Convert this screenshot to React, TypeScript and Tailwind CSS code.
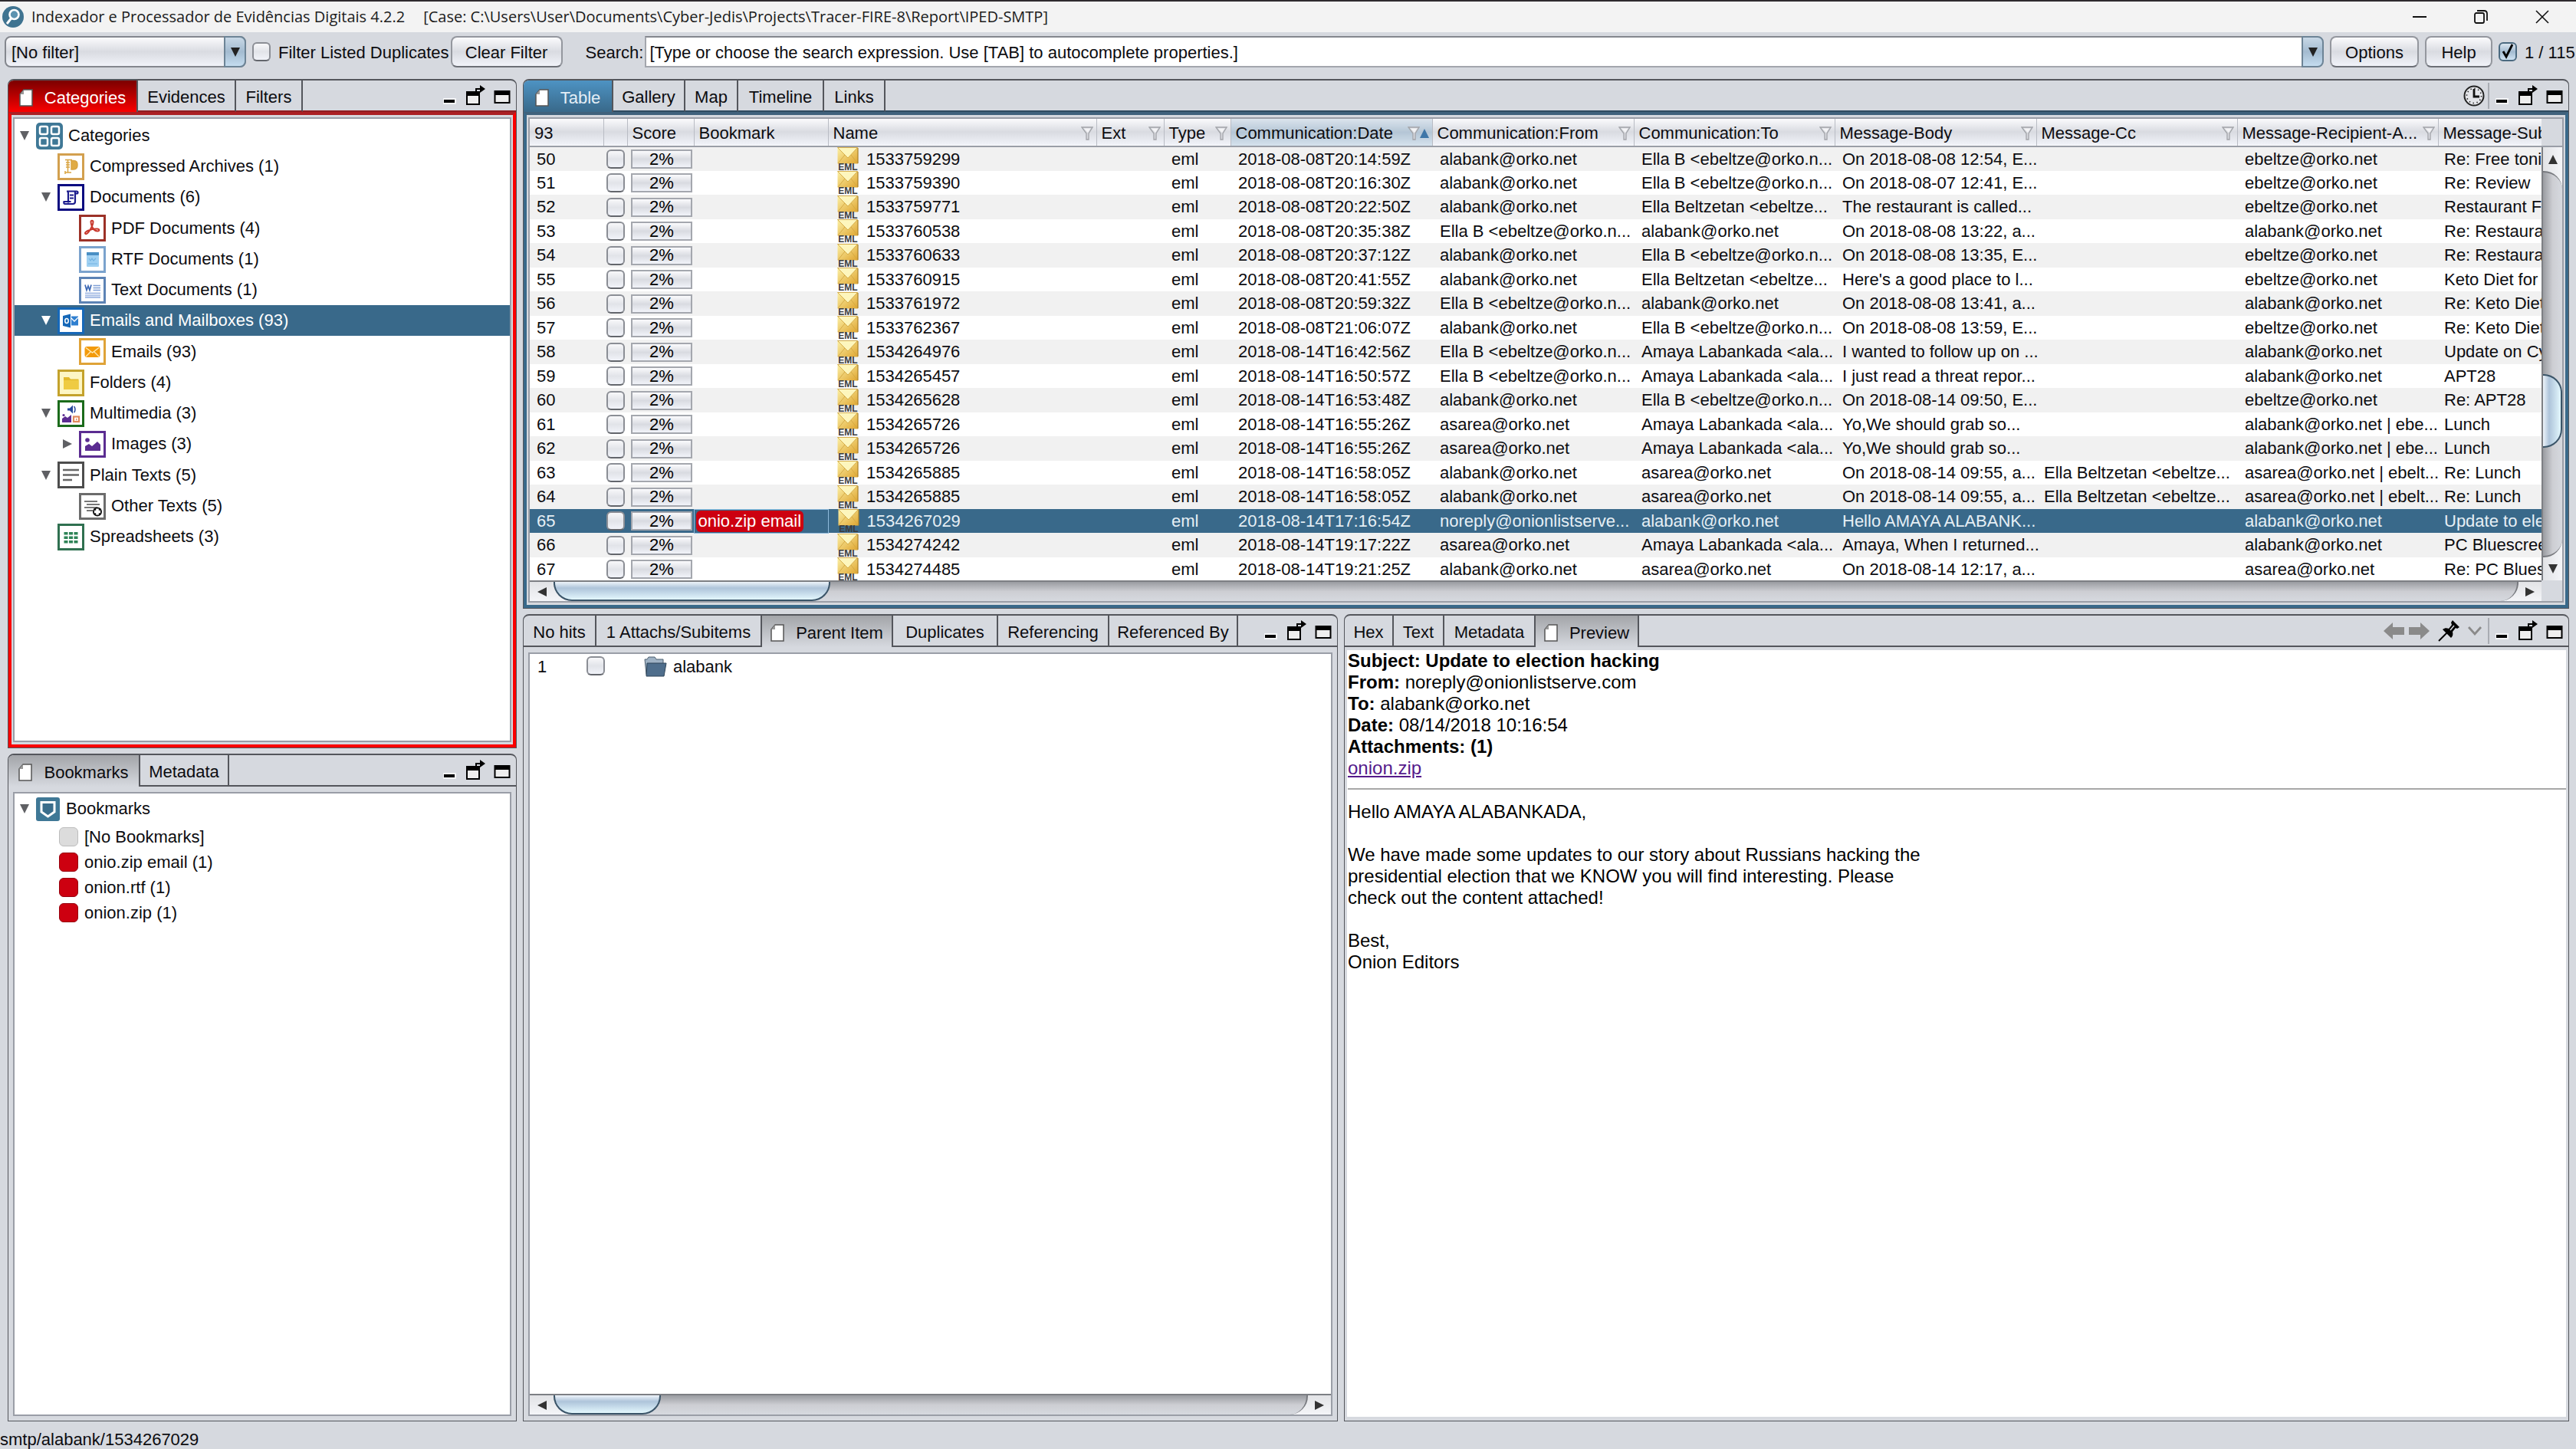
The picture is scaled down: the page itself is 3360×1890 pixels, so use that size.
import React from 'react';
import clsx from 'clsx';

type Tone = 'red' | 'blue' | 'plain';

type Tab = {
    label: string;
    width: string;
    active?: boolean;
};

type MailRow = {
    id: number;
    name: string;
    date: string;
    from: string;
    to: string;
    body: string;
    cc?: string;
    recipient: string;
    subject: string;
    bookmark?: string;
};

type IconKind =
    | 'zip'
    | 'doc'
    | 'pdf'
    | 'rtf'
    | 'word'
    | 'outlook'
    | 'mail'
    | 'folder'
    | 'media'
    | 'image'
    | 'text'
    | 'other'
    | 'sheet';

type TreeNode = {
    label: string;
    depth: number;
    icon: IconKind | 'root';
    arrow?: 'open' | 'closed';
    selected?: boolean;
};

const ALABANK = 'alabank@orko.net';
const ASAREA = 'asarea@orko.net';
const EBELTZE = 'ebeltze@orko.net';
const ELLA_B = 'Ella B <ebeltze@orko.n...';
const ELLA_BELTZETAN = 'Ella Beltzetan <ebeltze...';
const AMAYA = 'Amaya Labankada <ala...';

const rows: MailRow[] = [
    { id: 50, name: '1533759299', date: '2018-08-08T20:14:59Z', from: ALABANK, to: ELLA_B, body: 'On 2018-08-08 12:54, E...', recipient: EBELTZE, subject: 'Re: Free toni' },
    { id: 51, name: '1533759390', date: '2018-08-08T20:16:30Z', from: ALABANK, to: ELLA_B, body: 'On 2018-08-07 12:41, E...', recipient: EBELTZE, subject: 'Re: Review' },
    { id: 52, name: '1533759771', date: '2018-08-08T20:22:50Z', from: ALABANK, to: ELLA_BELTZETAN, body: 'The restaurant is called...', recipient: EBELTZE, subject: 'Restaurant F' },
    { id: 53, name: '1533760538', date: '2018-08-08T20:35:38Z', from: ELLA_B, to: ALABANK, body: 'On 2018-08-08 13:22, a...', recipient: ALABANK, subject: 'Re: Restaura' },
    { id: 54, name: '1533760633', date: '2018-08-08T20:37:12Z', from: ALABANK, to: ELLA_B, body: 'On 2018-08-08 13:35, E...', recipient: EBELTZE, subject: 'Re: Restaura' },
    { id: 55, name: '1533760915', date: '2018-08-08T20:41:55Z', from: ALABANK, to: ELLA_BELTZETAN, body: "Here's a good place to l...", recipient: EBELTZE, subject: 'Keto Diet for' },
    { id: 56, name: '1533761972', date: '2018-08-08T20:59:32Z', from: ELLA_B, to: ALABANK, body: 'On 2018-08-08 13:41, a...', recipient: ALABANK, subject: 'Re: Keto Diet' },
    { id: 57, name: '1533762367', date: '2018-08-08T21:06:07Z', from: ALABANK, to: ELLA_B, body: 'On 2018-08-08 13:59, E...', recipient: EBELTZE, subject: 'Re: Keto Diet' },
    { id: 58, name: '1534264976', date: '2018-08-14T16:42:56Z', from: ELLA_B, to: AMAYA, body: 'I wanted to follow up on ...', recipient: ALABANK, subject: 'Update on Cy' },
    { id: 59, name: '1534265457', date: '2018-08-14T16:50:57Z', from: ELLA_B, to: AMAYA, body: 'I just read a threat repor...', recipient: ALABANK, subject: 'APT28' },
    { id: 60, name: '1534265628', date: '2018-08-14T16:53:48Z', from: ALABANK, to: ELLA_B, body: 'On 2018-08-14 09:50, E...', recipient: EBELTZE, subject: 'Re: APT28' },
    { id: 61, name: '1534265726', date: '2018-08-14T16:55:26Z', from: ASAREA, to: AMAYA, body: 'Yo,We should grab so...', recipient: 'alabank@orko.net | ebe...', subject: 'Lunch' },
    { id: 62, name: '1534265726', date: '2018-08-14T16:55:26Z', from: ASAREA, to: AMAYA, body: 'Yo,We should grab so...', recipient: 'alabank@orko.net | ebe...', subject: 'Lunch' },
    { id: 63, name: '1534265885', date: '2018-08-14T16:58:05Z', from: ALABANK, to: ASAREA, body: 'On 2018-08-14 09:55, a...', cc: ELLA_BELTZETAN, recipient: 'asarea@orko.net | ebelt...', subject: 'Re: Lunch' },
    { id: 64, name: '1534265885', date: '2018-08-14T16:58:05Z', from: ALABANK, to: ASAREA, body: 'On 2018-08-14 09:55, a...', cc: ELLA_BELTZETAN, recipient: 'asarea@orko.net | ebelt...', subject: 'Re: Lunch' },
    { id: 65, name: '1534267029', date: '2018-08-14T17:16:54Z', from: 'noreply@onionlistserve...', to: ALABANK, body: 'Hello AMAYA ALABANK...', recipient: ALABANK, subject: 'Update to ele', bookmark: 'onio.zip email' },
    { id: 66, name: '1534274242', date: '2018-08-14T19:17:22Z', from: ASAREA, to: AMAYA, body: 'Amaya, When I returned...', recipient: ALABANK, subject: 'PC Bluescree' },
    { id: 67, name: '1534274485', date: '2018-08-14T19:21:25Z', from: ALABANK, to: ASAREA, body: 'On 2018-08-14 12:17, a...', recipient: ASAREA, subject: 'Re: PC Blues' },
];

const columns = [
    { label: '93', width: 'w-[96px]' },
    { label: '', width: 'w-[31px]' },
    { label: 'Score', width: 'w-[87px]' },
    { label: 'Bookmark', width: 'w-[175px]' },
    { label: 'Name', width: 'w-[350px]', filter: true },
    { label: 'Ext', width: 'w-[88px]', filter: true },
    { label: 'Type', width: 'w-[87px]', filter: true },
    { label: 'Communication:Date', width: 'w-[263px]', filter: true, sorted: true },
    { label: 'Communication:From', width: 'w-[263px]', filter: true },
    { label: 'Communication:To', width: 'w-[262px]', filter: true },
    { label: 'Message-Body', width: 'w-[263px]', filter: true },
    { label: 'Message-Cc', width: 'w-[262px]', filter: true },
    { label: 'Message-Recipient-A...', width: 'w-[262px]', filter: true },
    { label: 'Message-Sub', width: 'w-auto' },
];

const categories: TreeNode[] = [
    { label: 'Categories', depth: 0, icon: 'root', arrow: 'open' },
    { label: 'Compressed Archives (1)', depth: 1, icon: 'zip' },
    { label: 'Documents (6)', depth: 1, icon: 'doc', arrow: 'open' },
    { label: 'PDF Documents (4)', depth: 2, icon: 'pdf' },
    { label: 'RTF Documents (1)', depth: 2, icon: 'rtf' },
    { label: 'Text Documents (1)', depth: 2, icon: 'word' },
    { label: 'Emails and Mailboxes (93)', depth: 1, icon: 'outlook', arrow: 'open', selected: true },
    { label: 'Emails (93)', depth: 2, icon: 'mail' },
    { label: 'Folders (4)', depth: 1, icon: 'folder' },
    { label: 'Multimedia (3)', depth: 1, icon: 'media', arrow: 'open' },
    { label: 'Images (3)', depth: 2, icon: 'image', arrow: 'closed' },
    { label: 'Plain Texts (5)', depth: 1, icon: 'text', arrow: 'open' },
    { label: 'Other Texts (5)', depth: 2, icon: 'other' },
    { label: 'Spreadsheets (3)', depth: 1, icon: 'sheet' },
];

const indent = ['pl-[7px]', 'pl-[35px]', 'pl-[63px]'];

const nimbus = 'bg-linear-to-b from-[#fbfbfd] via-[#d9dbe1] to-[#f1f3f9]';

const frameColor: Record<IconKind, string> = {
    zip: '#d3a04f',
    doc: '#0b0b80',
    pdf: '#9c3127',
    rtf: '#7ba3cd',
    word: '#5c83b5',
    outlook: '#1668b8',
    mail: '#dfa338',
    folder: '#c4a22c',
    media: '#1b6b1b',
    image: '#5b2c91',
    text: '#4d4d4d',
    other: '#6c6c6c',
    sheet: '#2f7050',
};

const IconGlyph = ({ kind }: { kind: IconKind }) => {
    switch (kind) {
        case 'zip':
            return (
                <g fill="none" stroke="#d9a441" strokeWidth="1.5">
                    <path d="M10 8.500h9M13.500 9v16M11 12h5M11 15h5M11 18h5M10 25h8" />
                    <path d="M18 9.500h3c3.500 0 5 2 5 5.500s-1.500 6-5 6h-3z" fill="#e0ab45" />
                    <path d="M10 23v4" />
                </g>
            );
        case 'doc':
            return (
                <g fill="none" stroke="#1a1a8c" strokeWidth="2.200">
                    <path d="M12 9.500h13c2 0 2 3 0 3h-2M12 9.500c2 0 2 1 2 3v12M23 10v13c0 2-1 3-3 3H10c-1.500 0-2-1-1.500-3h9M16 14.500h5M16 18.500h5" />
                </g>
            );
        case 'pdf':
            return (
                <path
                    d="M15.500 9.500c0-2.500 3-2.500 3 0 0 3-2 7-4.500 11-1.500 2.500-4 5.500-5.500 4.500s.5-3 4-4.500c4-1.700 8-2.300 11.500-2 3 .3 3 3 .5 3-3 0-6-2.500-7.500-6-.7-2-1.500-4-1.500-6z"
                    fill="none"
                    stroke="#c8372c"
                    strokeWidth="2"
                />
            );
        case 'rtf':
            return (
                <g>
                    <rect x="10" y="8" width="16" height="19" rx="1" fill="#9fd0f2" />
                    <rect x="10" y="8" width="16" height="4" fill="#4a8fc4" />
                    <path d="M13 16l2 3 2-3 2 3 3-3M12 23h12" stroke="#74b4e2" fill="none" strokeWidth="1.200" />
                </g>
            );
        case 'word':
            return (
                <g stroke="#3c68b4" fill="none">
                    <path d="M8 10.500l2 7 2-5.500 2 5.500 2-7" strokeWidth="1.700" />
                    <path d="M18.500 11.500H28M18.500 14.500H28M18.500 17.500H28" stroke="#7f9fd6" strokeWidth="1.600" />
                    <path d="M8 21.500h20M8 24.500h20M8 27h20" stroke="#a9bfe6" strokeWidth="1.800" />
                </g>
            );
        case 'outlook':
            return (
                <g>
                    <path d="M7 11l10-2.500v18L7 24z" fill="#1668b8" />
                    <path d="M18 11.500h9v12h-9z" fill="#2f7fd0" />
                    <path d="M18 14l4 4 5-5" fill="none" stroke="#fff" strokeWidth="1.300" />
                    <ellipse cx="12" cy="17.500" rx="2.200" ry="3" fill="none" stroke="#fff" strokeWidth="1.500" />
                </g>
            );
        case 'mail':
            return (
                <g>
                    <rect x="7.500" y="11" width="20" height="14" rx="3" fill="#f39a0a" />
                    <path d="M9 12.500l8.500 6.500 8.500-6.500M9 24l6-6M26 24l-6-6" fill="none" stroke="#ffe9b0" strokeWidth="1.400" />
                </g>
            );
        case 'folder':
            return (
                <g>
                    <rect x="3" y="3" width="29" height="29" fill="#fdf6c4" />
                    <path d="M8 10h7l2 2.500h10.500V26H8z" fill="#e3b92a" />
                    <path d="M8 14h19.500v12H8z" fill="#efcb42" />
                </g>
            );
        case 'media':
            return (
                <g>
                    <path d="M13 10.500h3l4-4v11l-4-4h-3z" fill="#27489b" />
                    <path d="M21.500 8c2 2 2 6 0 8" fill="none" stroke="#27489b" strokeWidth="1.500" />
                    <path d="M6 29v-5l4-3 3 2 5-4v10z" fill="#5b2c91" />
                    <circle cx="8" cy="19.500" r="1.600" fill="#5b2c91" />
                    <rect x="21" y="21.500" width="7" height="6.500" fill="#fff" stroke="#e08a5c" strokeWidth="2.200" />
                    <path d="M24 23.500v3l2-1.500z" fill="#e08a5c" />
                </g>
            );
        case 'image':
            return (
                <g fill="#5b2c91">
                    <circle cx="11" cy="12" r="2.800" />
                    <path d="M8 26v-6l5-3 4 3 7-6 4 4v8z" />
                </g>
            );
        case 'text':
            return <path d="M7 11h21M7 17.500h21M7 24h12" stroke="#666" strokeWidth="2.600" />;
        case 'other':
            return (
                <g>
                    <path d="M7 11h17M10 15h17M7 19h17M10 23h8" stroke="#777" strokeWidth="2" />
                    <circle cx="24" cy="24.500" r="6" fill="#111" />
                    <path d="M24 20.500v8M20 24.500h8" stroke="#fff" strokeWidth="3.600" />
                </g>
            );
        case 'sheet':
            return (
                <g fill="#2e8457">
                    {[8.5, 15, 21.5].map((x) =>
                        [11, 16.5, 22].map((y) => <rect key={`${x}-${y}`} x={x} y={y} width="5" height="3.500" />)
                    )}
                </g>
            );
    }
};

const CategoryIcon = ({ kind }: { kind: IconKind | 'root' }) => {
    if (kind === 'root') {
        return (
            <svg viewBox="0 0 35 35" className="size-[35px] shrink-0">
                <rect width="35" height="35" rx="5" fill="#3f7896" />
                {[5, 20].map((x) =>
                    [5, 20].map((y) => (
                        <rect key={`${x}-${y}`} x={x} y={y} width="10" height="10" rx="2" fill="#3f7896" stroke="#fff" strokeWidth="2.500" />
                    ))
                )}
            </svg>
        );
    }
    return (
        <svg viewBox="0 0 35 35" className="size-[35px] shrink-0">
            <rect x="1.500" y="1.500" width="32" height="32" fill="#fff" stroke={frameColor[kind]} strokeWidth="3" />
            <IconGlyph kind={kind} />
        </svg>
    );
};

const Triangle = ({ dir, className = '' }: { dir: 'up' | 'down' | 'left' | 'right'; className?: string }) => {
    const d = {
        up: 'M0 12L6 0l6 12z',
        down: 'M0 0h12L6 12z',
        left: 'M12 0v12L0 6z',
        right: 'M0 0l12 6-12 6z',
    }[dir];
    return (
        <svg viewBox="0 0 12 12" className={clsx('size-3 shrink-0', className)} preserveAspectRatio="none">
            <path d={d} fill="currentColor" />
        </svg>
    );
};

const PageIcon = () => (
    <svg viewBox="0 0 18 23" className="h-[23px] w-[18px] shrink-0">
        <path d="M6 1h11v21H1V7z" fill="#fff" stroke="#555" strokeWidth="1.500" />
        <path d="M6 1v6H1z" fill="#999" />
    </svg>
);

const FunnelIcon = () => (
    <svg viewBox="0 0 16 20" className="h-5 w-4 shrink-0">
        <path d="M1 2h14L10 10v8H7v-8z" fill="#d9dbe0" stroke="#a2a4a9" strokeWidth="1.300" />
        <path d="M3.500 3.500h9L9 9z" fill="#f4f4f6" />
    </svg>
);

const EmlIcon = () => (
    <svg viewBox="0 0 28 31" className="block h-[31px] w-7">
        <defs>
            <linearGradient id="env" x1="0" y1="0" x2="1" y2="1">
                <stop offset="0" stopColor="#fbf0a6" />
                <stop offset="1" stopColor="#dfa530" />
            </linearGradient>
        </defs>
        <rect x="0.500" y="0.500" width="26.500" height="21" fill="url(#env)" />
        <path d="M0.500 0.500h26L14 14z" fill="#fdf6bd" stroke="#d3a843" strokeWidth="0.900" />
        <path d="M1 21L10 10M26.500 21L18 10" stroke="#d3a843" strokeWidth="0.900" />
        <path d="M27 1v20" stroke="#a8812a" strokeWidth="1.200" />
        <text x="14" y="30" textAnchor="middle" fontFamily="Liberation Sans" fontWeight="700" fontSize="12" fill="#3c3c3c">
            EML
        </text>
    </svg>
);

const WindowIcons = () => (
    <div className="flex items-center pr-[7px]">
        <button aria-label="Minimize" className="w-[30px]">
            <svg viewBox="0 0 30 28" className="h-7 w-[30px]">
                <rect x="-1" y="17" width="18" height="8" fill="#fff" opacity="0.700" />
                <rect x="1" y="19" width="14" height="4" />
            </svg>
        </button>
        <button aria-label="Detach" className="w-[36px]">
            <svg viewBox="0 0 36 28" className="h-7 w-9">
                <rect x="1" y="9" width="16" height="16" fill="#eee" stroke="#000" strokeWidth="2" />
                <rect x="0" y="8" width="18" height="6" />
                <path d="M13 9V5h6" fill="none" stroke="#000" strokeWidth="2" />
                <path d="M18 0l7 5-7 5z" />
            </svg>
        </button>
        <button aria-label="Maximize" className="w-[22px]">
            <svg viewBox="0 0 22 28" className="h-7 w-[22px]">
                <rect x="1.500" y="8" width="19" height="15" fill="#eee" stroke="#000" strokeWidth="2" />
                <rect x="1" y="7" width="20" height="6" />
            </svg>
        </button>
    </div>
);

const ClockIcon = () => (
    <svg viewBox="0 0 28 28" className="-mr-1 size-7">
        <circle cx="14" cy="14" r="12.500" fill="#e4e5e9" stroke="#222" strokeWidth="2" />
        <circle cx="14" cy="14" r="9.500" fill="none" stroke="#222" strokeWidth="1.600" strokeDasharray="1.400 3.574" />
        <path d="M14 5v10h7" fill="none" stroke="#111" strokeWidth="2.800" />
    </svg>
);

const PreviewTools = () => (
    <div className="flex h-full items-center gap-1.5">
        <button aria-label="Back">
            <svg viewBox="0 0 27 22" className="h-[22px] w-[27px]" fill="#8a8a8a"><path d="M0 11L12 0v6h15v10H12v6z" /></svg>
        </button>
        <button aria-label="Forward">
            <svg viewBox="0 0 27 22" className="h-[22px] w-[27px]" fill="#8a8a8a"><path d="M27 11L15 0v6H0v10h15v6z" /></svg>
        </button>
        <button aria-label="Pin" className="ml-1">
            <svg viewBox="0 0 30 28" className="h-7 w-[30px]">
                <path d="M20 0l9 9-3 2-2-1-4 5c1 4 0 6-2 8L7 12c3-2 5-2 8-1l4-5-1-3z" />
                <path d="M13 16L2 27" stroke="#000" strokeWidth="2" />
                <path d="M17 13l5-6" stroke="#d6d9df" strokeWidth="1.500" />
            </svg>
        </button>
        <button aria-label="More" className="ml-1">
            <svg viewBox="0 0 18 14" className="h-3.5 w-[18px]"><path d="M1 2l8 9 8-9" fill="none" stroke="#8a8a8a" strokeWidth="2.800" /></svg>
        </button>
    </div>
);

const activeTab: Record<Tone, string> = {
    red: 'bg-linear-to-b from-[#7c0000] to-[#fb0000] text-white',
    blue: 'bg-linear-to-b from-[#4d93c3] to-[#39698a] text-[#e3eef6]',
    plain: 'bg-linear-to-b from-[#a3a5a9] to-[#d6d9df]',
};

const headLine: Record<Tone, string> = {
    red: 'border-b-[#8f1d22]',
    blue: 'border-b-[#2f4b60]',
    plain: 'border-b-[#54565c]',
};

const bodyFrame: Record<Tone, string> = {
    red: 'border-4 border-[#fb0000] border-t-[#ab2024] px-0.5 py-[3px]',
    blue: 'border-4 border-[#39698a] border-t-[#40627c] px-0.5 py-[3px]',
    plain: 'px-[6px] pt-[7px] pb-[6px]',
};

type PanelProps = {
    tabs: Tab[];
    tone?: Tone;
    tools?: React.ReactNode;
    bare?: boolean;
    children: React.ReactNode;
};

const Panel = ({ tabs, tone = 'plain', tools, bare = false, children }: PanelProps) => (
    <section className="flex min-h-0 min-w-0 flex-col overflow-hidden rounded-t-lg border border-t-2 border-[#54565c]">
        <div className="flex h-[41px] shrink-0" role="tablist">
            {tabs.map((tab) => (
                <button
                    key={tab.label}
                    role="tab"
                    aria-selected={!!tab.active}
                    className={clsx(
                        'flex shrink-0 items-center justify-center border-r-2 border-r-[#54565c] pt-1 whitespace-nowrap',
                        tab.width,
                        tab.active ? activeTab[tone] : clsx('border-b-2', headLine[tone])
                    )}
                >
                    {tab.active && (
                        <span className="mr-[15px]">
                            <PageIcon />
                        </span>
                    )}
                    {tab.label}
                </button>
            ))}
            <div className={clsx('flex flex-1 items-center justify-end border-b-2', headLine[tone])}>
                {tools && <div className="mr-2 flex h-[34px] items-center border-r-2 border-[#a9acb3] pr-2">{tools}</div>}
                <WindowIcons />
            </div>
        </div>
        <div className={clsx('flex min-h-0 flex-1 flex-col', bare ? 'px-[3px] pt-1 pb-[5px]' : bodyFrame[tone])}>
            <div className={clsx('flex min-h-0 flex-1 flex-col overflow-hidden bg-white', !bare && 'border-2 border-[#9a9ea7]')}>
                {children}
            </div>
        </div>
    </section>
);

const CheckBox = ({ label }: { label: string }) => (
    <input
        type="checkbox"
        aria-label={label}
        className="block h-[25px] w-6 appearance-none rounded-md border-2 border-[#8b8e95] border-b-[#63666c] bg-linear-to-b from-[#f8f8fa] via-[#e2e4e9] to-[#f1f3f9]"
    />
);

const HorizontalScroll = ({ thumb }: { thumb: string }) => (
    <div className="flex h-[27px] shrink-0 border-t-2 border-[#7d7f84] bg-linear-to-b from-[#e2e3e6] to-[#f4f5f8] text-[#333]">
        <button aria-label="Scroll left" className="flex w-[31px] items-center justify-center">
            <Triangle dir="left" />
        </button>
        <div className="flex flex-1 rounded-b-3xl border-r-2 border-[#77797e] bg-linear-to-b from-[#9a9ca1] via-[#cdced3] to-[#d6d9df]">
            <div className={clsx('rounded-b-3xl border-2 border-t-0 border-[#3a5468] bg-linear-to-b from-[#eef4fa] via-[#aec4da] via-35% to-[#e3f7fd]', thumb)} />
        </div>
        <button aria-label="Scroll right" className="flex w-[30px] items-center justify-center">
            <Triangle dir="right" />
        </button>
    </div>
);

const CategoryTree = () => (
    <ul className="pt-0.5">
        {categories.map((node) => (
            <li
                key={node.label}
                className={clsx(
                    'flex h-10 items-center nth-[4n]:h-[41px]',
                    indent[node.depth],
                    node.selected && 'bg-[#39698a] text-white'
                )}
            >
                <span className={clsx('mr-[9px] w-3', node.selected ? 'text-white' : 'text-[#5f6064]')}>
                    {node.arrow && <Triangle dir={node.arrow === 'open' ? 'down' : 'right'} />}
                </span>
                <CategoryIcon kind={node.icon} />
                <span className="ml-[7px]">{node.label}</span>
            </li>
        ))}
    </ul>
);

const bookmarks = ['[No Bookmarks]', 'onio.zip email (1)', 'onion.rtf (1)', 'onion.zip (1)'];

const BookmarkTree = () => (
    <div>
        <div className="flex h-10 items-center pl-[7px]">
            <Triangle dir="down" className="mr-[9px] text-[#5f6064]" />
            <svg viewBox="0 0 31 31" className="mr-2 size-[31px]">
                <rect width="31" height="31" rx="3" fill="#3f7896" />
                <path d="M7 6.500h17v12.500l-8.500 6-8.500-6z" fill="#3a6d8b" stroke="#fff" strokeWidth="3" />
            </svg>
            Bookmarks
        </div>
        <ul>
            {bookmarks.map((name, i) => (
                <li key={name} className="flex h-[33px] items-center gap-2 pl-[58px]">
                    <span
                        className={clsx(
                            'size-[25px] rounded-md border',
                            i === 0 ? 'border-[#bdbdbd] bg-[#dcdcdc]' : 'border-[#96000e] bg-[#cd0010]'
                        )}
                    />
                    {name}
                </li>
            ))}
        </ul>
    </div>
);

const MailTable = () => (
    <table className="w-full table-fixed border-collapse whitespace-nowrap">
        <thead>
            <tr className={clsx('h-9 border-b-2 border-[#9a9ea7]', nimbus)}>
                {columns.map((col, i) => (
                    <th
                        key={i}
                        className={clsx(
                            'overflow-hidden border-r border-[#b9bcc4] pt-[3px] pr-1 pb-0 pl-1.5 font-normal last:border-r-0',
                            col.width,
                            col.sorted && 'bg-linear-to-b from-[#dbe4ed] via-[#b4c5d5] to-[#d5e2ed]'
                        )}
                    >
                        <div className="flex items-center justify-between">
                            {col.label}
                            {col.filter && (
                                <span className="flex items-center">
                                    <FunnelIcon />
                                    {col.sorted && <Triangle dir="up" className="text-[#3f76a8]" />}
                                </span>
                            )}
                        </div>
                    </th>
                ))}
            </tr>
        </thead>
        <tbody>
            {rows.map((row) => (
                <tr
                    key={row.id}
                    className={clsx(
                        'h-[31px] odd:h-8 first:h-[31px]',
                        row.bookmark ? 'bg-[#39698a] text-[#e6eff5]' : 'odd:bg-[#f1f1f1]'
                    )}
                >
                    <td className="p-0 pl-[9px]">{row.id}</td>
                    <td className="p-0 pl-1">
                        <CheckBox label={`Select item ${row.id}`} />
                    </td>
                    <td className="p-0 pl-[5px]">
                        <button className={clsx('block h-[25px] w-20 border-2 border-[#a4a7ae] leading-5 text-black', nimbus)}>2%</button>
                    </td>
                    <td className={clsx('p-0', row.bookmark && 'border border-[#8fbbdc]')}>
                        {row.bookmark && (
                            <span className="ml-0.5 block w-fit rounded-md bg-[#cd0010] px-[3px] leading-7 text-white">{row.bookmark}</span>
                        )}
                    </td>
                    <td className="p-0 pl-3">
                        <div className="flex items-center gap-2.5">
                            <EmlIcon />
                            {row.name}
                        </div>
                    </td>
                    <td />
                    <td className="p-0 pl-2.5">eml</td>
                    <td className="p-0 pl-2.5">{row.date}</td>
                    <td className="p-0 pl-2.5">{row.from}</td>
                    <td className="p-0 pl-2.5">{row.to}</td>
                    <td className="p-0 pl-2.5">{row.body}</td>
                    <td className="p-0 pl-2.5">{row.cc}</td>
                    <td className="p-0 pl-2.5">{row.recipient}</td>
                    <td className="overflow-hidden p-0 pl-2">{row.subject}</td>
                </tr>
            ))}
        </tbody>
    </table>
);

const VerticalScroll = () => (
    <div className="flex w-[27px] shrink-0 flex-col bg-[#d6d9df]">
        <div className="h-[37px] border-b-2 border-[#9a9ea7]" />
        <div className="flex min-h-0 flex-1 flex-col border-l-2 border-[#7d7f84] bg-linear-to-r from-[#e2e3e6] to-[#f4f5f8] text-[#333]">
            <button aria-label="Scroll up" className="flex h-[31px] items-center justify-center">
                <Triangle dir="up" />
            </button>
            <div className="flex flex-1 flex-col rounded-r-3xl border-y-2 border-[#77797e] bg-linear-to-r from-[#9a9ca1] via-[#cdced3] to-[#d6d9df]">
                <div className="flex-[265]" />
                <div className="h-24 rounded-r-3xl border-2 border-l-0 border-[#3a5468] bg-linear-to-r from-[#eef4fa] via-[#aec4da] via-35% to-[#e3f7fd]" />
                <div className="flex-[142]" />
            </div>
            <button aria-label="Scroll down" className="flex h-[30px] items-center justify-center">
                <Triangle dir="down" />
            </button>
        </div>
        <div className="h-[27px]" />
    </div>
);

const TitleBar = () => (
    <header className="flex h-[42px] items-center border-t-2 border-[#2e2a2e] bg-[#f3f3f3] font-['Open_Sans',sans-serif] text-[20px] text-[#1b1b1b]">
        <svg viewBox="0 0 28 28" className="ml-[3px] size-7">
            <circle cx="14" cy="14" r="14" fill="#3f7390" />
            <circle cx="15.500" cy="11" r="6" fill="#5d93b0" stroke="#fff" strokeWidth="2.600" />
            <path d="M11.500 16L6 23" stroke="#fff" strokeWidth="3" />
        </svg>
        <h1 className="ml-2.5 flex gap-6 whitespace-nowrap">
            <span>Indexador e Processador de Evidências Digitais 4.2.2</span>
            <span>[Case: C:\Users\User\Documents\Cyber-Jedis\Projects\Tracer-FIRE-8\Report\IPED-SMTP]</span>
        </h1>
        <div className="ml-auto flex items-center gap-[62px] pr-[35px]">
            <button aria-label="Minimize window">
                <svg viewBox="0 0 18 18" className="size-[18px]"><path d="M0 9h18" stroke="#111" strokeWidth="2" /></svg>
            </button>
            <button aria-label="Restore window">
                <svg viewBox="0 0 18 18" className="size-[18px]" fill="none" stroke="#111" strokeWidth="1.800">
                    <rect x="1" y="4" width="12" height="13" rx="2" />
                    <path d="M4 1h9c2.500 0 4 1.500 4 4v9" />
                </svg>
            </button>
            <button aria-label="Close window">
                <svg viewBox="0 0 18 18" className="size-[18px]"><path d="M1 1l16 16M17 1L1 17" stroke="#111" strokeWidth="1.600" /></svg>
            </button>
        </div>
    </header>
);

const pushButton = 'h-[41px] rounded-lg border-2 border-[#94979e] border-b-[#6c6f76] pt-0.5';
const dropArrow = 'flex items-center justify-center rounded-r-lg border-2 border-[#6d8496] bg-linear-to-b from-[#c8d8e6] via-[#a3bbd0] to-[#c4dcef] text-[#222]';

const Toolbar = () => (
    <div className="flex h-[61px] items-start pt-[5px] pl-[6px] whitespace-nowrap">
        <div className="relative">
            <select
                aria-label="Filter"
                className={clsx('h-[41px] w-[315px] appearance-none rounded-lg border-2 border-[#84878e] pt-0.5 pl-[7px]', nimbus)}
            >
                <option>[No filter]</option>
            </select>
            <span className={clsx('pointer-events-none absolute inset-y-0 right-0 w-[29px]', dropArrow)}>
                <Triangle dir="down" />
            </span>
        </div>
        <label className="ml-2 flex h-[41px] items-center gap-2.5">
            <CheckBox label="Filter Listed Duplicates" />
            <span className="pt-0.5">Filter Listed Duplicates</span>
        </label>
        <button className={clsx('ml-0.5 w-[146px]', pushButton, nimbus)}>Clear Filter</button>
        <label htmlFor="search" className="ml-[30px] pt-px leading-[41px]">
            Search:
        </label>
        <input
            id="search"
            type="text"
            defaultValue="[Type or choose the search expression. Use [TAB] to autocomplete properties.]"
            className="ml-0.5 h-[41px] min-w-0 flex-1 border-2 border-r-0 border-[#a3a6ad] border-t-[#84878e] bg-white pt-0.5 pl-1"
        />
        <button aria-label="Search history" className={clsx('h-[41px] w-[29px]', dropArrow)}>
            <Triangle dir="down" />
        </button>
        <button className={clsx('ml-2 w-[116px]', pushButton, nimbus)}>Options</button>
        <button className={clsx('ml-2 w-[88px]', pushButton, nimbus)}>Help</button>
        <label className="ml-2 flex h-[41px] w-[101px] items-center gap-2.5">
            <span className="relative">
                <input
                    type="checkbox"
                    defaultChecked
                    className="block h-[25px] w-6 appearance-none rounded-md border-2 border-[#4b6a80] bg-linear-to-b from-[#dbe6f0] via-[#a3bbd0] to-[#cfe3f3]"
                />
                <svg viewBox="0 0 24 25" className="pointer-events-none absolute inset-0 h-[25px] w-6">
                    <path d="M6 12l4 7L18 3" fill="none" stroke="#000" strokeWidth="2.800" />
                </svg>
            </span>
            <span className="pt-0.5">1 / 115</span>
        </label>
    </div>
);

const PreviewMessage = () => (
    <article className="flex-1 pl-px text-[24px] leading-7 text-black">
        <p className="font-bold">Subject: Update to election hacking</p>
        <p><b>From:</b> noreply@onionlistserve.com</p>
        <p><b>To:</b> alabank@orko.net</p>
        <p><b>Date:</b> 08/14/2018 10:16:54</p>
        <p className="font-bold">Attachments: (1)</p>
        <p><a href="#onion" className="text-[#551a8b] underline">onion.zip</a></p>
        <hr className="mt-3 mb-[15px] border-t-2 border-[#a8a8a8]" />
        <p className="mb-7">Hello AMAYA ALABANKADA,</p>
        <p>We have made some updates to our story about Russians hacking the</p>
        <p>presidential election that we KNOW you will find interesting. Please</p>
        <p className="mb-7">check out the content attached!</p>
        <p>Best,</p>
        <p>Onion Editors</p>
    </article>
);

export default function App() {
    return (
        <div className="flex h-screen w-full flex-col overflow-hidden bg-[#d6d9df] font-['Liberation_Sans',Arial,sans-serif] text-[22px] leading-7 text-[#0c0c10]">
            <TitleBar />
            <Toolbar />
            <main className="grid min-h-0 flex-1 grid-cols-[664px_minmax(0,1fr)] gap-2 pr-[9px] pl-2.5">
                <div className="grid min-h-0 grid-rows-[minmax(0,873fr)_minmax(0,871fr)] gap-[7px]">
                    <Panel
                        tone="red"
                        tabs={[
                            { label: 'Categories', width: 'w-[169px]', active: true },
                            { label: 'Evidences', width: 'w-[128px]' },
                            { label: 'Filters', width: 'w-[87px]' },
                        ]}
                    >
                        <CategoryTree />
                    </Panel>
                    <Panel
                        tabs={[
                            { label: 'Bookmarks', width: 'w-[172px]', active: true },
                            { label: 'Metadata', width: 'w-[116px]' },
                        ]}
                    >
                        <BookmarkTree />
                    </Panel>
                </div>
                <div className="grid min-h-0 grid-rows-[minmax(0,691fr)_minmax(0,1053fr)] gap-[7px]">
                    <Panel
                        tone="blue"
                        tools={<ClockIcon />}
                        tabs={[
                            { label: 'Table', width: 'w-[117px]', active: true },
                            { label: 'Gallery', width: 'w-[94px]' },
                            { label: 'Map', width: 'w-[69px]' },
                            { label: 'Timeline', width: 'w-[112px]' },
                            { label: 'Links', width: 'w-[80px]' },
                        ]}
                    >
                        <div className="flex min-h-0 flex-1">
                            <div className="flex min-w-0 flex-1 flex-col">
                                <div className="min-h-0 flex-1 overflow-hidden">
                                    <MailTable />
                                </div>
                                <HorizontalScroll thumb="w-[361px]" />
                            </div>
                            <VerticalScroll />
                        </div>
                    </Panel>
                    <div className="grid min-h-0 grid-cols-[minmax(0,1063fr)_minmax(0,1598fr)] gap-2">
                        <Panel
                            tabs={[
                                { label: 'No hits', width: 'w-[95px]' },
                                { label: '1 Attachs/Subitems', width: 'w-[216px]' },
                                { label: 'Parent Item', width: 'w-[171px]', active: true },
                                { label: 'Duplicates', width: 'w-[137px]' },
                                { label: 'Referencing', width: 'w-[145px]' },
                                { label: 'Referenced By', width: 'w-[168px]' },
                            ]}
                        >
                            <div className="flex flex-1 items-start pt-[3px] pl-2.5">
                                <span className="w-16">1</span>
                                <CheckBox label="Select parent item" />
                                <svg viewBox="0 0 30 27" className="mr-2 ml-[51px] h-[27px] w-[30px]">
                                    <path d="M1 4h3l2-3h8l2 3h9v20H3z" fill="#9fb2c4" stroke="#4d5f70" strokeWidth="1" />
                                    <path d="M4 9h25l-3 17H3z" fill="#4f6e8c" stroke="#2e4458" strokeWidth="1" />
                                </svg>
                                alabank
                            </div>
                            <HorizontalScroll thumb="w-[140px]" />
                        </Panel>
                        <Panel
                            bare
                            tools={<PreviewTools />}
                            tabs={[
                                { label: 'Hex', width: 'w-[64px]' },
                                { label: 'Text', width: 'w-[66px]' },
                                { label: 'Metadata', width: 'w-[119px]' },
                                { label: 'Preview', width: 'w-[135px]', active: true },
                            ]}
                        >
                            <PreviewMessage />
                        </Panel>
                    </div>
                </div>
            </main>
            <footer className="h-9 shrink-0 leading-[48px]">smtp/alabank/1534267029</footer>
        </div>
    );
}
